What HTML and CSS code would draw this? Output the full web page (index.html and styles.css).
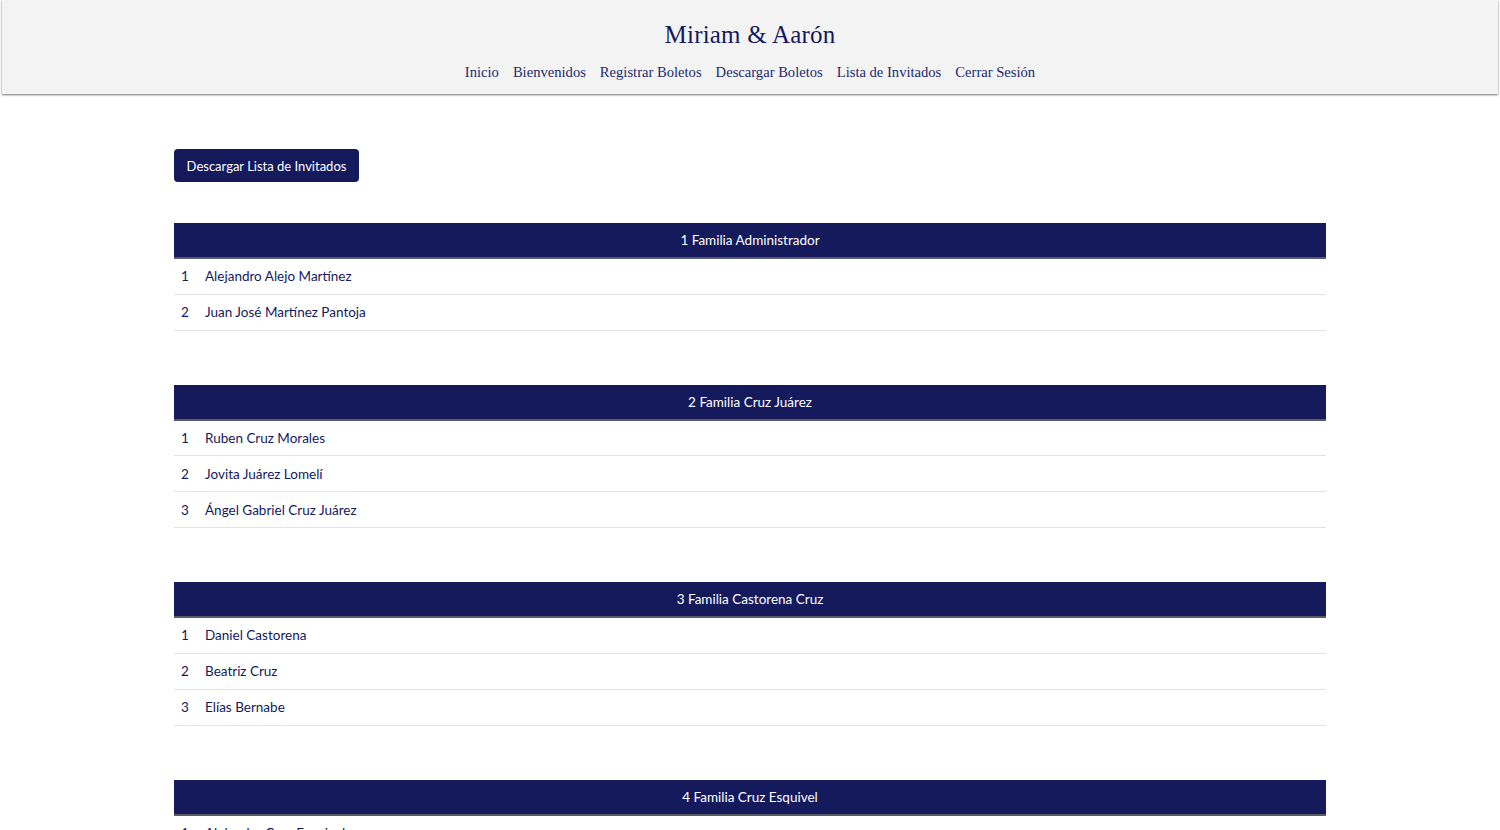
FILE: index.html
```html
<!DOCTYPE html>
<html lang="es">
<head>
<meta charset="utf-8">
<title>Miriam &amp; Aarón</title>
<link rel="stylesheet" href="styles.css">
</head>
<body>
<header class="site-header">
  <h1 class="brand">Miriam &amp; Aarón</h1>
  <nav class="nav">
    <a href="#">Inicio</a>
    <a href="#">Bienvenidos</a>
    <a href="#">Registrar Boletos</a>
    <a href="#">Descargar Boletos</a>
    <a href="#">Lista de Invitados</a>
    <a href="#">Cerrar Sesión</a>
  </nav>
</header>
<main class="container">
  <button class="btn">Descargar Lista de Invitados</button>

  <table class="guests">
    <thead><tr><th colspan="2">1 Familia Administrador</th></tr></thead>
    <tbody>
      <tr><td class="num">1</td><td>Alejandro Alejo Martínez</td></tr>
      <tr><td class="num">2</td><td>Juan José Martínez Pantoja</td></tr>
    </tbody>
  </table>

  <table class="guests">
    <thead><tr><th colspan="2">2 Familia Cruz Juárez</th></tr></thead>
    <tbody>
      <tr><td class="num">1</td><td>Ruben Cruz Morales</td></tr>
      <tr><td class="num">2</td><td>Jovita Juárez Lomelí</td></tr>
      <tr><td class="num">3</td><td>Ángel Gabriel Cruz Juárez</td></tr>
    </tbody>
  </table>

  <table class="guests">
    <thead><tr><th colspan="2">3 Familia Castorena Cruz</th></tr></thead>
    <tbody>
      <tr><td class="num">1</td><td>Daniel Castorena</td></tr>
      <tr><td class="num">2</td><td>Beatriz Cruz</td></tr>
      <tr><td class="num">3</td><td>Elías Bernabe</td></tr>
    </tbody>
  </table>

  <table class="guests">
    <thead><tr><th colspan="2">4 Familia Cruz Esquivel</th></tr></thead>
    <tbody>
      <tr><td class="num">1</td><td>Alejandro Cruz Esquivel</td></tr>
      <tr><td class="num">2</td><td>María Cruz Esquivel</td></tr>
    </tbody>
  </table>
</main>
</body>
</html>
```
FILE: styles.css
```css
* { box-sizing: border-box; }
html, body { margin: 0; padding: 0; }
body {
  background: #ffffff;
  font-family: "Nunito", "Lato", "Noto Sans", sans-serif;
  color: #141a5c;
}
.site-header {
  background: #f3f3f3;
  height: 94px;
  margin: 0 2px;
  box-shadow: 0 1px 2px rgba(0, 0, 0, 0.55);
  text-align: center;
  padding-top: 20px;
}
.brand {
  margin: 0;
  font-family: "Liberation Serif", "DejaVu Serif", serif;
  font-weight: 400;
  font-size: 25px;
  line-height: 30px;
  letter-spacing: 0.2px;
  color: #151a5c;
}
.nav {
  display: flex;
  justify-content: center;
  gap: 14px;
  margin-top: 13px;
}
.nav a {
  font-family: "Liberation Serif", "DejaVu Serif", serif;
  font-size: 14.6px;
  line-height: 18px;
  color: #232a6c;
  text-decoration: none;
}
.container {
  width: 1152px;
  margin: 0 auto;
  padding-top: 55px;
}
.btn {
  display: block;
  width: 185px;
  height: 33px;
  padding: 0;
  background: #141a5c;
  color: #ffffff;
  border: none;
  border-radius: 4px;
  font-family: "Lato", "Noto Sans", sans-serif;
  font-size: 13px;
  cursor: pointer;
}
.guests {
  width: 100%;
  border-collapse: collapse;
  margin-top: 41px;
  font-family: "Lato", "Noto Sans", sans-serif;
  font-size: 13.5px;
}
.guests + .guests { margin-top: 54px; }
.guests th {
  background: #141a5c;
  color: #ffffff;
  font-weight: 400;
  height: 35px;
  padding: 0 8px;
  text-align: center;
  border-bottom: 2px solid #5b5b66;
}
.guests td {
  height: 36px;
  padding: 0 8px;
  border-bottom: 1px solid #e3e3e6;
  color: #141a5c;
}
.guests td.num {
  width: 23px;
  padding-left: 7px;
  padding-right: 0;
}
```
